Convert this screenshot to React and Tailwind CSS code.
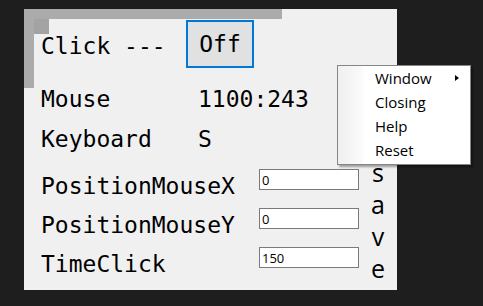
import React from 'react';

const mono = "font-['DejaVu_Sans_Mono','Liberation_Mono',monospace]";

const InputRow = ({ label, value }) => (
  <div className="flex h-[39px]">
    <span className="w-[218px] leading-[39px]">{label}</span>
    <input
      readOnly
      defaultValue={value}
      className="mt-[2px] w-[100px] h-[21px] border border-[#7a7a7a] bg-white pl-[2px] text-[13px] leading-[19px] font-['Open_Sans',sans-serif] text-black outline-none"
    />
  </div>
);

const ContextMenu = () => (
  <div className="absolute left-[313px] top-[56px] w-[134px] h-[100px] flex bg-white border border-[#868686] shadow-[2px_2px_2px_rgba(0,0,0,0.35)] font-['Open_Sans',sans-serif] text-[15px] text-black">
    <div className="w-[25px] h-full bg-gradient-to-r from-[#efefef] to-[#fbfbfb]" />
    <div className="flex-1 flex flex-col">
      <div className="h-[24px] leading-[24px] pl-[12px] pr-[11px] flex items-center justify-between">
        <span>Window</span>
        <span className="w-0 h-0 border-y-[3.5px] border-y-transparent border-l-[4px] border-l-black" />
      </div>
      <div className="h-[24px] leading-[24px] pl-[12px]">Closing</div>
      <div className="h-[24px] leading-[24px] pl-[12px]">Help</div>
      <div className="h-[24px] leading-[24px] pl-[12px]">Reset</div>
    </div>
  </div>
);

const App = () => {
  return (
    <div className={`w-[483px] h-[306px] bg-[#1e1e1e] pt-[9px] pl-[24px] overflow-hidden ${mono}`}>
      <div className="relative w-[373px] h-[281px] bg-[#f0f0f0] text-[23px] text-black">
        <div className="w-[258px] h-[10px] bg-[#ababab]" />
        <div className="absolute left-[10px] top-[10px] w-[15px] h-[15px] bg-[#a3a3a3]" />

        <div className="flex">
          <div className="w-[10px] h-[69px] bg-[#ababab] shrink-0" />
          <div className="pl-[7px] pt-[1px] flex flex-col">
            <div className="flex h-[48px]">
              <span className="w-[145px] mt-[2px] leading-[48px]">Click ---</span>
              <button className="w-[68px] h-[48px] border-2 border-[#0078d7] bg-[#e1e1e1] leading-none flex items-center justify-center">
                Off
              </button>
            </div>

            <div className="flex h-[40px] mt-[11px] leading-[40px]">
              <span className="w-[157px]">Mouse</span>
              <span>1100:243</span>
            </div>
            <div className="flex h-[40px] leading-[40px]">
              <span className="w-[157px]">Keyboard</span>
              <span>S</span>
            </div>

            <div className="flex mt-[8px]">
              <div className="flex flex-col">
                <InputRow label="PositionMouseX" value="0" />
                <InputRow label="PositionMouseY" value="0" />
                <InputRow label="TimeClick" value="150" />
              </div>
              <div className="ml-[9px] -mt-[11px] w-[20px] break-all text-center text-[25px] leading-[32px] font-['Open_Sans',sans-serif]">
                save
              </div>
            </div>
          </div>
        </div>

        <ContextMenu />
      </div>
    </div>
  );
};

export default App;
